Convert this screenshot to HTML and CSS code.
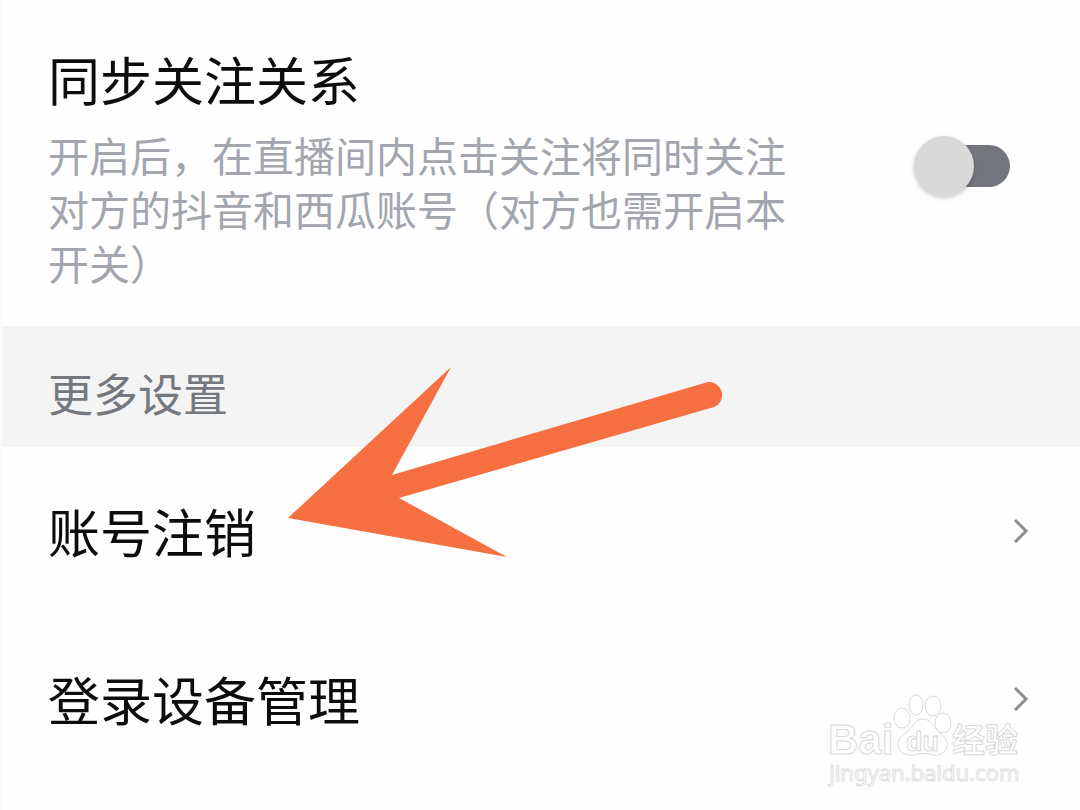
FILE: index.html
```
<!DOCTYPE html>
<html lang="zh-CN">
<head>
    <meta charset="UTF-8">
    <meta name="viewport" content="width=device-width, initial-scale=1.0">
    <title>设置</title>
    <link rel="stylesheet" href="styles.css">
</head>
<body>
    <main class="settings">
        <div class="sync-row">
            <div class="sync-text">
                <label class="row-title" for="sync-follow">同步关注关系</label>
                <p id="sync-desc">开启后，在直播间内点击关注将同时关注对方的抖音和西瓜账号（对方也需开启本开关）</p>
            </div>
            <input type="checkbox" class="switch" id="sync-follow" aria-describedby="sync-desc">
        </div>

        <h2 class="section-title">更多设置</h2>

        <a class="link-row" href="#logout">
            <span>账号注销</span>
            <svg class="chevron" viewBox="0 0 16 28" aria-hidden="true"><path d="M2 3 L13 14 L2 25"/></svg>
        </a>
        <a class="link-row" href="#devices">
            <span>登录设备管理</span>
            <svg class="chevron" viewBox="0 0 16 28" aria-hidden="true"><path d="M2 3 L13 14 L2 25"/></svg>
        </a>

        <!-- Seta apontando para 账号注销 -->
        <svg class="arrow" viewBox="0 0 436 192" aria-hidden="true">
            <path d="M0 152 L163 1 L104 109 L420 16 A13 13 0 0 1 426 41 L111 132 L219 191 Z"/>
        </svg>

        <svg class="watermark" viewBox="0 0 200 104" aria-hidden="true">
            <text class="wm-bai" x="3" y="64">Bai</text>
            <ellipse cx="77" cy="28" rx="8" ry="10"/>
            <ellipse cx="91" cy="15" rx="7" ry="10"/>
            <ellipse cx="108" cy="16" rx="8" ry="10"/>
            <ellipse cx="118" cy="33" rx="8" ry="10"/>
            <path d="M98 29 C106 29 108 37 114 42 C120 47 123 51 122 56 C121 63 115 66 108 65 C101 63 95 63 88 65 C80 66 74 62 73 55 C73 49 77 46 82 42 C88 37 90 29 98 29 Z"/>
            <text class="wm-du" x="81" y="61">du</text>
            <text class="wm-cn" x="127" y="62">经验</text>
            <text class="wm-url" x="4" y="91">jingyan.baidu.com</text>
        </svg>
    </main>
</body>
</html>
```

FILE: styles.css
```
* {
    box-sizing: border-box;
}
body {
    margin: 0;
    background-color: #fefefe;
    color: #0c0c0d;
    font-family: "Noto Sans CJK SC", sans-serif;
}
.settings {
    position: relative;
    min-height: 100vh;
    border-left: 2px solid #fbfbfb;
}
.sync-row {
    display: flex;
    align-items: center;
    justify-content: space-between;
    padding: 42px 70px 37px 46px;
}
.sync-text {
    width: 740px;
}
.row-title {
    display: block;
    font-size: 52px;
    line-height: 74px;
}
.sync-text p {
    margin: 11px 0 0;
    font-size: 41px;
    line-height: 54px;
    color: #a3a6ad;
}

/* Interruptor */
.switch {
    appearance: none;
    position: relative;
    flex: none;
    width: 96px;
    height: 60px;
    margin: 0;
    cursor: pointer;
}
.switch::before {
    content: "";
    position: absolute;
    left: 8px;
    right: 0;
    top: 9px;
    height: 42px;
    border-radius: 21px;
    background-color: #73767c;
}
.switch::after {
    content: "";
    position: absolute;
    left: 0;
    top: 0;
    width: 60px;
    height: 60px;
    border-radius: 50%;
    background-color: #d9d9d9;
    box-shadow: 0 2px 4px rgba(0, 0, 0, 0.2);
}
.switch:checked::after {
    left: 36px;
}

.section-title {
    margin: 0;
    padding: 37px 46px 24px;
    background-color: #f4f4f4;
    color: #75787e;
    font-size: 45px;
    font-weight: 400;
    line-height: 60px;
}
.link-row {
    display: flex;
    align-items: center;
    justify-content: space-between;
    min-height: 168px;
    padding: 0 51px 0 46px;
    color: inherit;
    font-size: 52px;
    line-height: 76px;
    text-decoration: none;
}
.chevron {
    width: 16px;
    height: 28px;
    fill: none;
    stroke: #8c8c8c;
    stroke-width: 3;
}

.arrow {
    position: absolute;
    left: 286px;
    top: 366px;
    width: 436px;
    height: 192px;
    fill: #f66f40;
    pointer-events: none;
}

/* Marca d'água */
.watermark {
    position: absolute;
    right: 55px;
    top: 690px;
    width: 200px;
    height: 104px;
    fill: #ffffff;
    stroke: #d9d9d9;
    stroke-width: 1;
    pointer-events: none;
}
.watermark text {
    font-family: "Liberation Sans", sans-serif;
    font-weight: 700;
}
.watermark .wm-bai {
    font-size: 42px;
}
.watermark .wm-du {
    font-size: 27px;
}
.watermark .wm-cn {
    font-family: "Noto Sans CJK SC", sans-serif;
    font-size: 33px;
}
.watermark .wm-url {
    font-family: "Noto Sans", sans-serif;
    font-size: 22px;
    font-weight: 400;
    stroke: #e0e0e0;
}
```
